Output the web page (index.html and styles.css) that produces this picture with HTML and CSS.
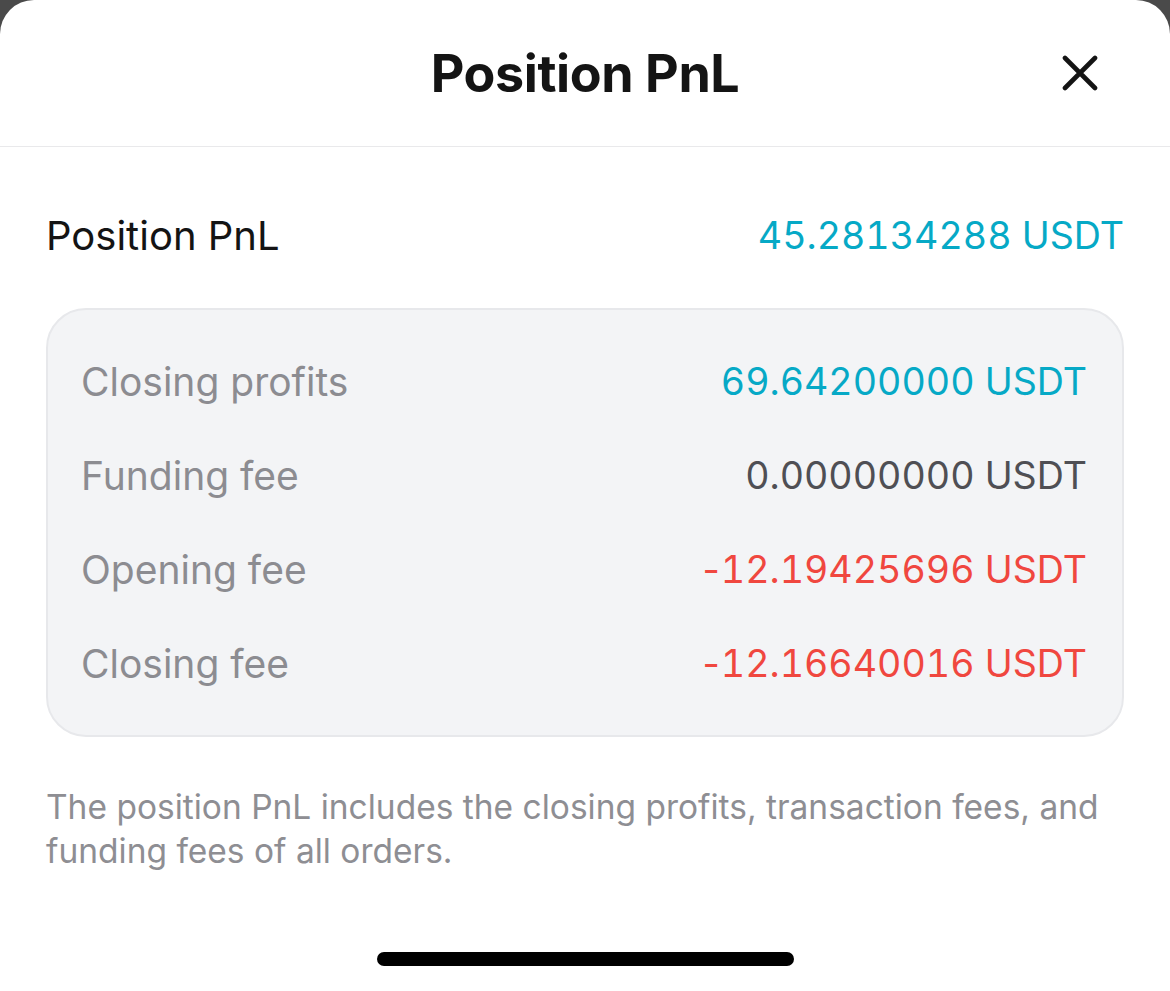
FILE: index.html
```html
<!DOCTYPE html>
<html>
<head>
  <meta charset="UTF-8">
  <title>Position PnL</title>
  <link rel="stylesheet" href="styles.css">
</head>
<body>
  <div class="sheet">
    <div class="sheet-header">
      <h1>Position PnL</h1>
      <button class="close" aria-label="Close">
        <svg width="36" height="36" viewBox="0 0 36 36">
          <path d="M3 3 L33 33 M33 3 L3 33" stroke="#141414" stroke-width="4.6" stroke-linecap="round" fill="none"/>
        </svg>
      </button>
    </div>

    <div class="sheet-body">
      <div class="total">
        <span class="total-label">Position PnL</span>
        <span class="total-value up">45.28134288 USDT</span>
      </div>

      <div class="detail">
        <div class="row">
          <span class="row-label">Closing profits</span>
          <span class="row-value up">69.64200000 USDT</span>
        </div>
        <div class="row">
          <span class="row-label">Funding fee</span>
          <span class="row-value">0.00000000 USDT</span>
        </div>
        <div class="row">
          <span class="row-label">Opening fee</span>
          <span class="row-value down"><span class="sign">-</span>12.19425696 USDT</span>
        </div>
        <div class="row">
          <span class="row-label">Closing fee</span>
          <span class="row-value down"><span class="sign">-</span>12.16640016 USDT</span>
        </div>
      </div>

      <p class="note">The position PnL includes the closing profits, transaction fees, and funding fees of all orders.</p>
    </div>

    <div class="home-bar"></div>
  </div>
</body>
</html>
```

FILE: styles.css
```css
body {
  margin: 0;
  background: #4a4a4a;
  font-family: Inter, "Noto Sans", sans-serif;
  -webkit-font-smoothing: antialiased;
}
.sheet {
  background: #fff;
  height: 991px;
  border-radius: 34px 34px 0 0;
  display: flex;
  flex-direction: column;
  overflow: hidden;
}
.sheet-header {
  height: 146px;
  border-bottom: 1.5px solid #e9e9eb;
  display: flex;
  align-items: center;
  justify-content: center;
  position: relative;
}
.sheet-header h1 {
  margin: 0;
  font-size: 52px;
  font-weight: 700;
  letter-spacing: -0.4px;
  color: #141414;
}
.close {
  position: absolute;
  right: 72px;
  top: 55px;
  background: none;
  border: none;
  padding: 0;
  width: 36px;
  height: 36px;
}
.sheet-body {
  padding: 0 46px;
}
.total {
  display: flex;
  justify-content: space-between;
  align-items: center;
  height: 161px;
  padding-top: 15px;
  box-sizing: border-box;
}
.total-label {
  font-size: 40px;
  color: #141414;
}
.total-value {
  font-size: 37.6px;
  font-variant-numeric: tabular-nums;
}
.up {
  color: #06a9c6;
}
.down {
  color: #f0473f;
}
.detail {
  background: #f3f4f6;
  border: 2px solid #e7e8eb;
  border-radius: 40px;
  padding: 24px 35px 25px 33px;
  display: flex;
  flex-direction: column;
}
.row {
  height: 94px;
  display: flex;
  justify-content: space-between;
  align-items: center;
}
.row-label {
  font-size: 39px;
  color: #8c8c91;
}
.row-value {
  font-size: 37.6px;
  font-variant-numeric: tabular-nums;
  color: #4f4f54;
}
.row-value.up {
  color: #06a9c6;
}
.row-value.down {
  color: #f0473f;
}
.sign {
  font-variant-numeric: normal;
  margin-right: 1px;
}
.note {
  margin: 48px 0 0;
  font-size: 33.5px;
  line-height: 44px;
  color: #8e8e93;
}
.home-bar {
  margin: auto auto 25px;
  width: 417px;
  height: 14px;
  border-radius: 7px;
  background: #000;
}
```
